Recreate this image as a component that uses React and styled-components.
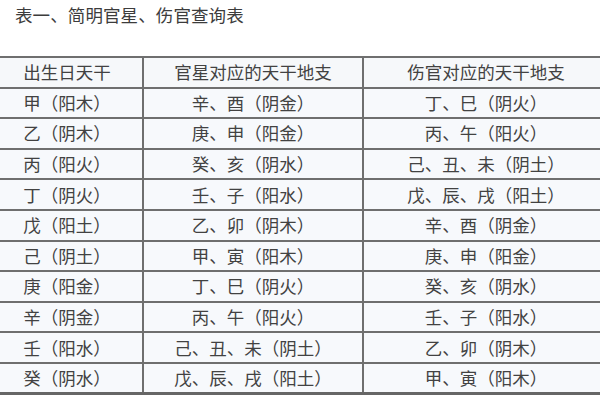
import React from "react";
import styled, { createGlobalStyle } from "styled-components";

const Global = createGlobalStyle`
  html, body { margin: 0; padding: 0; background: #ffffff; overflow: hidden; }
  body { font-family: "Noto Sans CJK SC", "Noto Sans", sans-serif; }
`;

const Page = styled.div`
  width: 600px;
  height: 400px;
  overflow: hidden;
  background: #ffffff;
`;

const Title = styled.div`
  padding-left: 15px;
  height: 56px;
  line-height: 29px;
  font-size: 17.5px;
  color: #3c3c3c;
  letter-spacing: 0.1px;
`;

const Table = styled.table`
  margin-left: -10px;
  width: 618px;
  border-collapse: collapse;
  table-layout: fixed;
  border-top: 2px solid #6c6c6c;
  border-bottom: 3px solid #666666;
`;

const Col = styled.col`
  width: ${(p) => p.$w}px;
`;

const Row = styled.tr`
  height: 30.6px;
`;

const Cell = styled.td`
  padding: 0;
  border: 2px solid #6f6f6f;
  background: ${(p) => (p.$head ? "#f6f8fa" : "#f7f9fc")};
  color: #424242;
  font-size: 17.5px;
  line-height: 26px;
  text-align: center;
  white-space: nowrap;
`;

const widths = [152, 220, 246];

const rows = [
  ["出生日天干", "官星对应的天干地支", "伤官对应的天干地支"],
  ["甲（阳木）", "辛、酉（阴金）", "丁、巳（阴火）"],
  ["乙（阴木）", "庚、申（阳金）", "丙、午（阳火）"],
  ["丙（阳火）", "癸、亥（阴水）", "己、丑、未（阴土）"],
  ["丁（阴火）", "壬、子（阳水）", "戊、辰、戌（阳土）"],
  ["戊（阳土）", "乙、卯（阴木）", "辛、酉（阴金）"],
  ["己（阴土）", "甲、寅（阳木）", "庚、申（阳金）"],
  ["庚（阳金）", "丁、巳（阴火）", "癸、亥（阴水）"],
  ["辛（阴金）", "丙、午（阳火）", "壬、子（阳水）"],
  ["壬（阳水）", "己、丑、未（阴土）", "乙、卯（阴木）"],
  ["癸（阴水）", "戊、辰、戌（阳土）", "甲、寅（阳木）"],
];

export default function App() {
  return (
    <Page>
      <Global />
      <Title>表一、简明官星、伤官查询表</Title>
      <Table>
        <colgroup>
          {widths.map((w, i) => (
            <Col key={i} $w={w} />
          ))}
        </colgroup>
        <tbody>
          {rows.map((r, i) => (
            <Row key={i}>
              {r.map((c, j) => (
                <Cell key={j} $head={i === 0}>
                  {c}
                </Cell>
              ))}
            </Row>
          ))}
        </tbody>
      </Table>
    </Page>
  );
}
